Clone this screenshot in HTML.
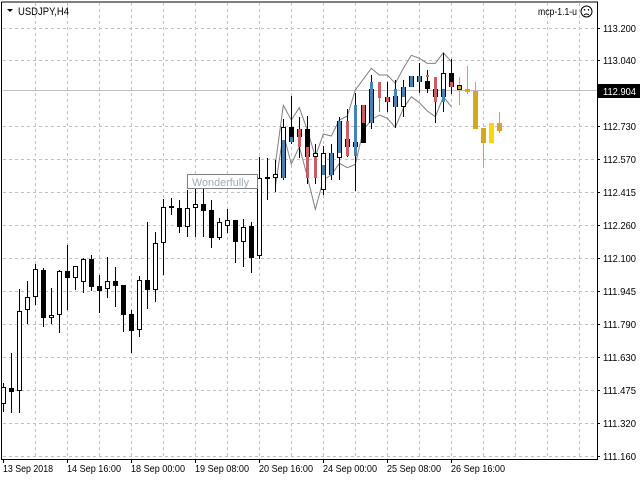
<!DOCTYPE html>
<html><head><meta charset="utf-8"><style>
html,body{margin:0;padding:0;background:#fff;width:640px;height:480px;overflow:hidden}
svg{display:block;font-family:"Liberation Sans","DejaVu Sans",sans-serif}
</style></head><body>
<svg width="640" height="480" viewBox="0 0 640 480" xmlns="http://www.w3.org/2000/svg">
<rect width="640" height="480" fill="#fff"/>
<g stroke="#c0c0c0" stroke-dasharray="3,3" stroke-width="1" shape-rendering="crispEdges">
<path d="M35.5 3V458M67.5 3V458M99.5 3V458M131.5 3V458M163.5 3V458M195.5 3V458M227.5 3V458M259.5 3V458M291.5 3V458M323.5 3V458M355.5 3V458M387.5 3V458M419.5 3V458M451.5 3V458M483.5 3V458M515.5 3V458M547.5 3V458M579.5 3V458"/>
<path d="M3 28.5H597M3 60.5H597M3 126.5H597M3 159.5H597M3 192.5H597M3 225.5H597M3 258.5H597M3 291.5H597M3 324.5H597M3 357.5H597M3 390.5H597M3 423.5H597M3 456.5H597"/>
</g>
<path d="M3 90.5H597" stroke="#c0c0c0" shape-rendering="crispEdges"/>
<g shape-rendering="crispEdges" stroke="#000" stroke-width="1">
<path d="M1.5 2V459.5H597.5V2H1.5" fill="none"/>
<path d="M597 28.5h3M597 60.5h3M597 126.5h3M597 159.5h3M597 192.5h3M597 225.5h3M597 258.5h3M597 291.5h3M597 324.5h3M597 357.5h3M597 390.5h3M597 423.5h3M597 456.5h3"/>
<path d="M3.5 459v4M67.5 459v4M131.5 459v4M195.5 459v4M259.5 459v4M323.5 459v4M387.5 459v4M451.5 459v4"/>
</g>
<g transform="translate(250,40) scale(0.33333)" fill="none" stroke="#808080" stroke-width="3">
<path d="M76 373L100 196L124 240L148 203L172 270L196 350L220 282L244 288L268 240L292 228L316 150L364 85L388 105L412 105L436 130L460 85L484 46L508 55L532 70L556 70L580 38L604 65"/>
<path d="M76 440L100 280L124 372L148 320L172 410L196 508L220 420L244 405L268 370L292 383L316 373L340 270L364 240L388 225L412 235L436 262L460 205L484 170L508 188L532 213L556 230L580 170L604 200"/>
</g>
<g stroke="#000" shape-rendering="crispEdges">
<path d="M3.5 383V412M11.5 353V413M19.5 289V413M27.5 281V324M35.5 264V305M43.5 268V327M51.5 288V324M59.5 270V333M67.5 245V310M75.5 266V290M83.5 258V293M91.5 255V291M99.5 275V313M107.5 257V298M115.5 267V307M123.5 285V332M131.5 310V353M139.5 276V337M147.5 222V309M155.5 232V302M163.5 199V275M171.5 198V215M179.5 200V233M187.5 190V237M195.5 188V237M203.5 188V237M211.5 200V248M219.5 218V240M227.5 209V233M235.5 220V263M243.5 219V267M251.5 222V273M259.5 157V259M267.5 158V200M275.5 160V192M283.5 119V180M291.5 96V144M299.5 117V158M307.5 116V184M315.5 144V184M323.5 146V195M331.5 144V180M339.5 117V180M347.5 109V157M355.5 93V191M363.5 105V143M371.5 75V129M387.5 82V112M395.5 80V128M403.5 80V117M411.5 76V87M419.5 63V93M427.5 70V93M435.5 77V123M443.5 53V112M451.5 59V94"/>
</g>
<g stroke="#cd5c5c" shape-rendering="crispEdges"><path d="M379.5 82V112"/></g>
<g stroke="#daa520" shape-rendering="crispEdges"><path d="M459.5 77V105M467.5 66V94M475.5 82V129M483.5 128V167M499.5 112V133"/></g>
<g stroke="#ffd700" shape-rendering="crispEdges"><path d="M491.5 123V143"/></g>
<g fill="#fff" stroke="#000" shape-rendering="crispEdges">
<rect x="1.5" y="387.5" width="4" height="16"/>
<rect x="17.5" y="311.5" width="4" height="79"/>
<rect x="25.5" y="297.5" width="4" height="12"/>
<rect x="33.5" y="269.5" width="4" height="27"/>
<rect x="49.5" y="315.5" width="4" height="2"/>
<rect x="57.5" y="271.5" width="4" height="43"/>
<rect x="73.5" y="266.5" width="4" height="11"/>
<rect x="81.5" y="259.5" width="4" height="22"/>
<rect x="105.5" y="281.5" width="4" height="7"/>
<rect x="137.5" y="280.5" width="4" height="49"/>
<rect x="153.5" y="243.5" width="4" height="46"/>
<rect x="161.5" y="207.5" width="4" height="35"/>
<rect x="185.5" y="208.5" width="4" height="18"/>
<rect x="193.5" y="204.5" width="4" height="3"/>
<rect x="217.5" y="222.5" width="4" height="15"/>
<rect x="225.5" y="220.5" width="4" height="5"/>
<rect x="241.5" y="227.5" width="4" height="14"/>
<rect x="257.5" y="178.5" width="4" height="77"/>
<rect x="273.5" y="174.5" width="4" height="3"/>
<rect x="281.5" y="127.5" width="4" height="50"/>
<rect x="297.5" y="129.5" width="4" height="7"/>
<rect x="313.5" y="153.5" width="4" height="3"/>
<rect x="321.5" y="153.5" width="4" height="36"/>
<rect x="329.5" y="153.5" width="4" height="21"/>
<rect x="337.5" y="121.5" width="4" height="36"/>
<rect x="401.5" y="87.5" width="4" height="19"/>
<rect x="441.5" y="73.5" width="4" height="23"/>
</g>
<g fill="#000" shape-rendering="crispEdges">
<rect x="9" y="388" width="5" height="4"/>
<rect x="41" y="270" width="5" height="48"/>
<rect x="65" y="271" width="5" height="7"/>
<rect x="89" y="259" width="5" height="28"/>
<rect x="97" y="286" width="5" height="5"/>
<rect x="113" y="281" width="5" height="5"/>
<rect x="121" y="285" width="5" height="30"/>
<rect x="129" y="314" width="5" height="17"/>
<rect x="145" y="280" width="5" height="10"/>
<rect x="169" y="206" width="5" height="2"/>
<rect x="177" y="208" width="5" height="19"/>
<rect x="201" y="204" width="5" height="7"/>
<rect x="209" y="210" width="5" height="28"/>
<rect x="233" y="220" width="5" height="22"/>
<rect x="249" y="226" width="5" height="32"/>
<rect x="265" y="177" width="5" height="2"/>
<rect x="289" y="127" width="5" height="15"/>
<rect x="305" y="129" width="5" height="28"/>
<rect x="345" y="139" width="5" height="8"/>
<rect x="353" y="142" width="5" height="5"/>
<rect x="361" y="105" width="5" height="38"/>
<rect x="369" y="89" width="5" height="34"/>
<rect x="385" y="97" width="5" height="5"/>
<rect x="393" y="96" width="5" height="11"/>
<rect x="409" y="76" width="5" height="11"/>
<rect x="417" y="76" width="5" height="6"/>
<rect x="425" y="81" width="5" height="8"/>
<rect x="433" y="89" width="5" height="8"/>
<rect x="449" y="73" width="5" height="14"/>
<rect x="457" y="85" width="5" height="5"/>
</g>
<g fill="#4682b4" shape-rendering="crispEdges">
<rect x="282" y="140" width="3" height="38"/>
<rect x="290" y="137" width="3" height="5"/>
<rect x="322" y="165" width="3" height="10"/>
<rect x="330" y="153" width="3" height="22"/>
<rect x="338" y="121" width="3" height="32"/>
<rect x="354" y="105" width="3" height="51"/>
<rect x="370" y="82" width="3" height="41"/>
<rect x="394" y="89" width="3" height="18"/>
<rect x="402" y="87" width="3" height="10"/>
<rect x="410" y="76" width="3" height="11"/>
<rect x="418" y="76" width="3" height="6"/>
<rect x="442" y="89" width="3" height="13"/>
</g>
<g fill="#cd5c5c" shape-rendering="crispEdges">
<rect x="298" y="129" width="3" height="18"/>
<rect x="306" y="147" width="3" height="31"/>
<rect x="314" y="157" width="3" height="21"/>
<rect x="346" y="121" width="3" height="35"/>
<rect x="362" y="105" width="3" height="18"/>
<rect x="378" y="82" width="3" height="16"/>
<rect x="386" y="97" width="3" height="5"/>
<rect x="426" y="75" width="3" height="2"/>
<rect x="434" y="77" width="3" height="25"/>
<rect x="450" y="82" width="3" height="5"/>
</g>
<g fill="#daa520" shape-rendering="crispEdges">
<rect x="458" y="86" width="3" height="3"/>
<rect x="465" y="89" width="5" height="3"/>
<rect x="473" y="91" width="5" height="38"/>
<rect x="481" y="128" width="5" height="15"/>
<rect x="497" y="123" width="5" height="8"/>
</g>
<rect x="489" y="123" width="5" height="20" fill="#ffd700"/>
<rect x="187.5" y="174.5" width="70" height="14" fill="#fff" stroke="#808080"/>
<text x="192" y="186" font-size="11" fill="#a0a8b8" textLength="57" lengthAdjust="spacingAndGlyphs">Wonderfully</text>
<path d="M7 9h6l-3 3z" fill="#000"/>
<text x="18" y="15" font-size="11" fill="#000" textLength="51" lengthAdjust="spacingAndGlyphs">USDJPY,H4</text>
<text x="538" y="15" font-size="10.5" fill="#000" textLength="39" lengthAdjust="spacingAndGlyphs">mcp-1.1-u</text>
<g fill="none" stroke="#000"><circle cx="586.5" cy="11.5" r="5.5"/><path d="M584 15q2.5-2 5 0"/></g>
<circle cx="584.5" cy="9.8" r="0.8"/><circle cx="588.5" cy="9.8" r="0.8"/>
<g font-size="10.5" fill="#000">
<text x="603" y="32" textLength="33" lengthAdjust="spacingAndGlyphs">113.200</text>
<text x="603" y="64" textLength="33" lengthAdjust="spacingAndGlyphs">113.040</text>
<text x="603" y="130" textLength="33" lengthAdjust="spacingAndGlyphs">112.730</text>
<text x="603" y="163" textLength="33" lengthAdjust="spacingAndGlyphs">112.570</text>
<text x="603" y="196" textLength="33" lengthAdjust="spacingAndGlyphs">112.415</text>
<text x="603" y="229" textLength="33" lengthAdjust="spacingAndGlyphs">112.260</text>
<text x="603" y="262" textLength="33" lengthAdjust="spacingAndGlyphs">112.100</text>
<text x="603" y="295" textLength="33" lengthAdjust="spacingAndGlyphs">111.945</text>
<text x="603" y="328" textLength="33" lengthAdjust="spacingAndGlyphs">111.790</text>
<text x="603" y="361" textLength="33" lengthAdjust="spacingAndGlyphs">111.630</text>
<text x="603" y="394" textLength="33" lengthAdjust="spacingAndGlyphs">111.475</text>
<text x="603" y="427" textLength="33" lengthAdjust="spacingAndGlyphs">111.320</text>
<text x="603" y="460" textLength="33" lengthAdjust="spacingAndGlyphs">111.160</text>
</g>
<rect x="598" y="84" width="42" height="14" fill="#000"/>
<text x="603" y="95" font-size="10.5" fill="#fff" textLength="33" lengthAdjust="spacingAndGlyphs">112.904</text>
<g font-size="10.5" fill="#000">
<text x="3" y="472" textLength="50" lengthAdjust="spacingAndGlyphs">13 Sep 2018</text>
<text x="67" y="472" textLength="54" lengthAdjust="spacingAndGlyphs">14 Sep 16:00</text>
<text x="131" y="472" textLength="54" lengthAdjust="spacingAndGlyphs">18 Sep 00:00</text>
<text x="195" y="472" textLength="54" lengthAdjust="spacingAndGlyphs">19 Sep 08:00</text>
<text x="259" y="472" textLength="54" lengthAdjust="spacingAndGlyphs">20 Sep 16:00</text>
<text x="323" y="472" textLength="54" lengthAdjust="spacingAndGlyphs">24 Sep 00:00</text>
<text x="387" y="472" textLength="54" lengthAdjust="spacingAndGlyphs">25 Sep 08:00</text>
<text x="451" y="472" textLength="54" lengthAdjust="spacingAndGlyphs">26 Sep 16:00</text>
</g>
</svg>
</body></html>
